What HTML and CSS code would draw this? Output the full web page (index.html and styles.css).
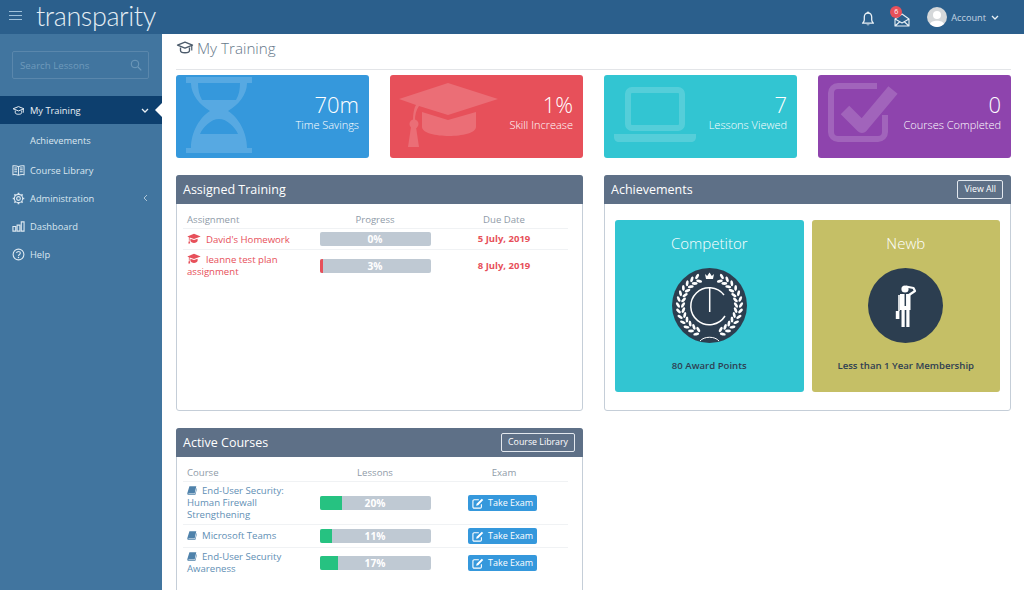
FILE: index.html
```html
<!DOCTYPE html>
<html lang="en">
<head>
<meta charset="utf-8">
<title>My Training</title>
<link rel="stylesheet" href="styles.css">
</head>
<body>
<svg class="defs" aria-hidden="true">
  <symbol id="cap" viewBox="0 0 24 18"><path d="M12 1 23.5 5.5 12 10 4.5 7.2V13H3.2V6.7L.5 5.5Z"/><path d="M5.8 9.3 12 11.6 18.2 9.3V13C18.2 15 15 16.5 12 16.5S5.8 15 5.8 13Z"/><path d="M2.2 17.5 3 13.5H4.7L5.5 17.5Z"/></symbol>
  <symbol id="capo" viewBox="0 0 24 18"><path d="M12 1.8 22 5.8 12 9.8 2 5.8Z" fill="none" stroke="currentColor" stroke-width="1.8" stroke-linejoin="round"/><path d="M6 9V13C6 15 9 16 12 16S18 15 18 13V9" fill="none" stroke="currentColor" stroke-width="1.8"/><path d="M21 6V13" stroke="currentColor" stroke-width="1.6"/></symbol>
  <symbol id="book" viewBox="0 0 14 13"><path d="M3.4 .5H13L10.8 10.2H2.6C2 10.2 1.8 10.9 2.4 11H11.2L13.4 3.2 14 3.8 11.8 12.5H2C.7 12.5 .2 11.2.5 10Z"/></symbol>
  <symbol id="edit" viewBox="0 0 14 13"><path d="M11 7.5V10.5C11 11.3 10.3 12 9.5 12H2.5C1.7 12 1 11.3 1 10.5V3.5C1 2.7 1.7 2 2.5 2H8" fill="none" stroke="currentColor" stroke-width="1.3"/><path d="M11.5.8 13.2 2.5 7.2 8.6 4.8 9.2 5.4 6.8Z"/></symbol>
</svg>

<div class="app">
  <header class="topbar">
    <div class="top-left">
      <span class="burger"><i></i><i></i><i></i></span>
      <span class="logo">transparity</span>
    </div>
    <div class="top-right">
      <svg class="ic-bell" viewBox="0 0 14 16"><path d="M7 2C4.6 2 3.3 3.8 3.3 6V9C3.3 10.4 2.5 11.3 1.6 12.2H12.4C11.5 11.3 10.7 10.4 10.7 9V6C10.7 3.8 9.4 2 7 2Z" fill="none" stroke="currentColor" stroke-width="1.3" stroke-linejoin="round"/><path d="M5.4 13.4C5.6 14.4 8.4 14.4 8.6 13.4Z" fill="currentColor"/><circle cx="7" cy="1.6" r="1" fill="currentColor"/></svg>
      <span class="mail">
        <svg class="ic-mail" viewBox="0 0 16 14"><path d="M1 6 8 1 15 6V13H1ZM1 6 8 10 15 6M1 13 6 8.5M15 13 10 8.5" fill="none" stroke="currentColor" stroke-width="1.1" stroke-linejoin="round"/></svg>
        <b class="badge">6</b>
      </span>
      <svg class="avatar" viewBox="0 0 20 20"><circle cx="10" cy="10" r="10" fill="#d5d8da"/><circle cx="10" cy="8" r="4" fill="#fff"/><path d="M3 17C4 12.5 16 12.5 17 17 13 21 7 21 3 17Z" fill="#fff"/></svg>
      <span class="account">Account</span>
      <svg class="chev" viewBox="0 0 8 5"><path d="M1 1 4 4 7 1" fill="none" stroke="currentColor" stroke-width="1.3"/></svg>
    </div>
  </header>

  <div class="layout">
    <nav class="sidebar">
      <div class="search"><span>Search Lessons</span>
        <svg viewBox="0 0 12 12"><circle cx="5" cy="5" r="3.8" fill="none" stroke="currentColor"/><path d="M8 8 11.3 11.3" stroke="currentColor" stroke-width="1.1"/></svg>
      </div>
      <a class="nav-item active">
        <svg class="nav-ic"><use href="#capo"/></svg><span>My Training</span>
        <svg class="nav-arrow" viewBox="0 0 8 5"><path d="M1 1 4 4 7 1" fill="none" stroke="currentColor" stroke-width="1.3"/></svg>
      </a>
      <a class="nav-item sub"><span>Achievements</span></a>
      <a class="nav-item">
        <svg class="nav-ic" viewBox="0 0 14 12"><path d="M7 2C5.5 1 3 .8 1 1V10.5C3 10.3 5.5 10.5 7 11.3 8.5 10.5 11 10.3 13 10.5V1C11 .8 8.5 1 7 2ZM7 2V11.3M2.5 3.3H5.5M2.5 5.3H5.5M2.5 7.3H5.5M8.5 3.3H11.5M8.5 5.3H11.5M8.5 7.3H11.5" fill="none" stroke="currentColor" stroke-width="1.1"/></svg><span>Course Library</span>
      </a>
      <a class="nav-item">
        <svg class="nav-ic" viewBox="0 0 14 14"><circle cx="7" cy="7" r="2" fill="none" stroke="currentColor" stroke-width="1.2"/><circle cx="7" cy="7" r="4.5" fill="none" stroke="currentColor" stroke-width="1.2"/><path d="M7 .8V2.5M7 11.5V13.2M.8 7H2.5M11.5 7H13.2M2.6 2.6 3.8 3.8M10.2 10.2 11.4 11.4M2.6 11.4 3.8 10.2M10.2 3.8 11.4 2.6" stroke="currentColor" stroke-width="1.8"/></svg><span>Administration</span>
        <svg class="nav-arrow nav-arrow-left" viewBox="0 0 5 8"><path d="M4 1 1 4 4 7" fill="none" stroke="currentColor" stroke-width="1"/></svg>
      </a>
      <a class="nav-item">
        <svg class="nav-ic" viewBox="0 0 14 12"><path d="M1 6H4V11H1ZM5.5 4.5H8.5V11H5.5ZM10 1H13V11H10Z" fill="none" stroke="currentColor" stroke-width="1.2"/></svg><span>Dashboard</span>
      </a>
      <a class="nav-item">
        <svg class="nav-ic" viewBox="0 0 14 14"><circle cx="7" cy="7" r="5.8" fill="none" stroke="currentColor" stroke-width="1.2"/><path d="M5 5.5C5 3.2 9 3.2 9 5.5 9 7 7 7 7 8.6" fill="none" stroke="currentColor" stroke-width="1.2"/><circle cx="7" cy="10.3" r=".8" fill="currentColor"/></svg><span>Help</span>
      </a>
    </nav>

    <main class="main">
      <h1 class="page-title"><svg><use href="#capo"/></svg>My Training</h1>

      <section class="grid">
        <div class="stat blue">
          <svg class="stat-ic" viewBox="0 0 120 83"><path fill-rule="evenodd" d="M10 2H76V8H71C71 20 62 30 52 36 62 42 71 57 71 73H76V78H10V73H15C15 57 24 42 34 36 24 30 15 20 15 8H10ZM22 8C22 14 23 20 26 25H60C63 20 64 14 64 8ZM43 44C35 44 27 52 24 59H62C59 52 51 44 43 44Z"/></svg>
          <div class="stat-text"><strong>70m</strong><span>Time Savings</span></div>
        </div>
        <div class="stat red">
          <svg class="stat-ic" viewBox="0 0 120 83"><path d="M58 8 108 24 58 40 29 31C26 35 25 40 25 45H23C23 39 24 33 26 30L9 24Z"/><path d="M32 37 58 45 86 37V52C86 58 72 61 59 61 46 61 32 58 32 52Z"/><circle cx="24" cy="49" r="4.5"/><path d="M18 72 21 52H26L29 72Z"/></svg>
          <div class="stat-text"><strong>1%</strong><span>Skill Increase</span></div>
        </div>
        <div class="stat teal">
          <svg class="stat-ic" viewBox="0 0 120 83"><rect x="24" y="15" width="54" height="38" rx="4" fill="none" stroke="#fff" stroke-width="6"/><path d="M10 59H92V62C92 65 90 67 87 67H15C12 67 10 65 10 62Z"/></svg>
          <div class="stat-text"><strong>7</strong><span>Lessons Viewed</span></div>
        </div>
        <div class="stat purple">
          <svg class="stat-ic" viewBox="0 0 120 83"><path d="M59 11H20C16 11 13 14 13 18V57C13 61 16 64 20 64H60C64 64 67 61 67 57V40" fill="none" stroke="#fff" stroke-width="6"/><path d="M27 35 44 52 75 15" fill="none" stroke="#fff" stroke-width="12" stroke-linejoin="round"/></svg>
          <div class="stat-text"><strong>0</strong><span>Courses Completed</span></div>
        </div>

        <article class="panel">
          <header class="panel-head"><h2>Assigned Training</h2></header>
          <div class="rows">
            <div class="row row-head"><span>Assignment</span><span class="mid">Progress</span><span class="mid">Due Date</span></div>
            <div class="row">
              <span class="name red-text"><svg class="cap-ic"><use href="#cap"/></svg>David's Homework</span>
              <span class="bar"><i class="fill fill-red" style="width:0%"></i><em>0%</em></span>
              <span class="mid date">5 July, 2019</span>
            </div>
            <div class="row">
              <span class="name red-text"><svg class="cap-ic"><use href="#cap"/></svg>leanne test plan assignment</span>
              <span class="bar"><i class="fill fill-red" style="width:3%"></i><em>3%</em></span>
              <span class="mid date">8 July, 2019</span>
            </div>
          </div>
        </article>

        <article class="panel">
          <header class="panel-head"><h2>Achievements</h2><a class="head-btn">View All</a></header>
          <div class="awards">
            <div class="award teal">
              <h3>Competitor</h3>
              <svg class="medal" viewBox="0 0 75 75">
                <defs>
                  <g id="lf"><ellipse cx="37" cy="6" rx="1.4" ry="3" transform="rotate(-55 37 6)"/><ellipse cx="37" cy="11" rx="1.4" ry="3" transform="rotate(55 37 11)"/></g>
                  <g id="lg"><ellipse cx="38" cy="6" rx="1.4" ry="3" transform="rotate(55 38 6)"/><ellipse cx="38" cy="11" rx="1.4" ry="3" transform="rotate(-55 38 11)"/></g>
                </defs>
                <circle cx="37.5" cy="37.5" r="37.5" fill="#2c3e50"/>
                <g fill="#fff">
                  <use href="#lf" transform="rotate(24 37.5 37.5)"/><use href="#lf" transform="rotate(35 37.5 37.5)"/><use href="#lf" transform="rotate(46 37.5 37.5)"/><use href="#lf" transform="rotate(57 37.5 37.5)"/><use href="#lf" transform="rotate(68 37.5 37.5)"/><use href="#lf" transform="rotate(79 37.5 37.5)"/><use href="#lf" transform="rotate(90 37.5 37.5)"/><use href="#lf" transform="rotate(101 37.5 37.5)"/><use href="#lf" transform="rotate(112 37.5 37.5)"/><use href="#lf" transform="rotate(123 37.5 37.5)"/><use href="#lf" transform="rotate(134 37.5 37.5)"/><use href="#lf" transform="rotate(145 37.5 37.5)"/><use href="#lf" transform="rotate(156 37.5 37.5)"/>
                  <use href="#lg" transform="rotate(-24 37.5 37.5)"/><use href="#lg" transform="rotate(-35 37.5 37.5)"/><use href="#lg" transform="rotate(-46 37.5 37.5)"/><use href="#lg" transform="rotate(-57 37.5 37.5)"/><use href="#lg" transform="rotate(-68 37.5 37.5)"/><use href="#lg" transform="rotate(-79 37.5 37.5)"/><use href="#lg" transform="rotate(-90 37.5 37.5)"/><use href="#lg" transform="rotate(-101 37.5 37.5)"/><use href="#lg" transform="rotate(-112 37.5 37.5)"/><use href="#lg" transform="rotate(-123 37.5 37.5)"/><use href="#lg" transform="rotate(-134 37.5 37.5)"/><use href="#lg" transform="rotate(-145 37.5 37.5)"/><use href="#lg" transform="rotate(-156 37.5 37.5)"/>
                  <path d="M33 6 35.2 8 37.5 4.5 39.8 8 42 6 41 11H34Z"/>
                </g>
                <path d="M52 27A18.5 18.5 0 1 0 53 48" fill="none" stroke="#fff" stroke-width="1.5"/>
                <path d="M37.7 20V44" stroke="#fff" stroke-width="1.5"/>
                <path d="M28 73C32 68 43 68 47 73" fill="none" stroke="#fff" stroke-width="1"/>
              </svg>
              <p>80 Award Points</p>
            </div>
            <div class="award khaki">
              <h3>Newb</h3>
              <svg class="medal" viewBox="0 0 75 75">
                <circle cx="37.5" cy="37.5" r="37.5" fill="#2c3e50"/>
                <circle cx="37" cy="21" r="3.6" fill="#fff"/>
                <path d="M32 26H42.5V42H41.5V59H38.3V42H36.7V59H33.5V42H32Z" fill="#fff"/>
                <path d="M41 27 47 23 45.5 20 38 18.5" fill="none" stroke="#fff" stroke-width="2.2" stroke-linejoin="round"/>
                <path d="M31 27V43" stroke="#fff" stroke-width="1.6"/>
                <rect x="27.8" y="43" width="3.6" height="8" fill="#fff"/>
                <path d="M37.3 26V38" stroke="#2c3e50" stroke-width="1.5"/>
              </svg>
              <p>Less than 1 Year Membership</p>
            </div>
          </div>
        </article>

        <article class="panel">
          <header class="panel-head"><h2>Active Courses</h2><a class="head-btn">Course Library</a></header>
          <div class="rows">
            <div class="row row-head"><span>Course</span><span class="mid">Lessons</span><span class="mid">Exam</span></div>
            <div class="row">
              <span class="name blue-text"><svg class="book-ic"><use href="#book"/></svg>End-User Security: Human Firewall Strengthening</span>
              <span class="bar"><i class="fill fill-green" style="width:20%"></i><em>20%</em></span>
              <span class="mid"><a class="exam"><svg><use href="#edit"/></svg>Take Exam</a></span>
            </div>
            <div class="row">
              <span class="name blue-text"><svg class="book-ic"><use href="#book"/></svg>Microsoft Teams</span>
              <span class="bar"><i class="fill fill-green" style="width:11%"></i><em>11%</em></span>
              <span class="mid"><a class="exam"><svg><use href="#edit"/></svg>Take Exam</a></span>
            </div>
            <div class="row">
              <span class="name blue-text"><svg class="book-ic"><use href="#book"/></svg>End-User Security Awareness</span>
              <span class="bar"><i class="fill fill-green" style="width:17%"></i><em>17%</em></span>
              <span class="mid"><a class="exam"><svg><use href="#edit"/></svg>Take Exam</a></span>
            </div>
          </div>
        </article>
      </section>
    </main>
  </div>
</div>
</body>
</html>
```
FILE: styles.css
```css
* { box-sizing: border-box; }
html, body { margin: 0; padding: 0; height: 590px; overflow: hidden; }
body { font-family: "Open Sans", "Liberation Sans", sans-serif; font-size: 9.6px; background: #fff; color: #5a6a7a; }
.defs { display: none; }
.app { height: 590px; display: flex; flex-direction: column; overflow: hidden; }

.topbar { height: 34px; flex: none; background: #2b5f8c; display: flex; justify-content: space-between; align-items: center; color: #fff; }
.top-left { display: flex; align-items: center; }
.burger { width: 13px; margin-left: 9px; margin-bottom: 3px; display: flex; flex-direction: column; gap: 3px; }
.burger i { display: block; height: 1px; background: #9fc1da; }
.logo { margin-left: 14px; font-family: "Lato", sans-serif; font-weight: 300; font-size: 27px; line-height: 30px; color: #e4edf3; margin-bottom: 3px; letter-spacing: -.4px; }
.top-right { display: flex; align-items: center; padding-right: 25px; color: #e9f0f5; }
.ic-bell { width: 14px; height: 16px; margin-top: 3px; }
.mail { position: relative; display: block; width: 16px; height: 14px; margin-left: 19px; margin-top: 6px; }
.ic-mail { width: 16px; height: 14px; display: block; }
.badge { position: absolute; left: -4px; top: -7px; width: 12px; height: 12px; border-radius: 50%; background: #e7505a; color: #fff; font-size: 7px; font-weight: 400; line-height: 12px; text-align: center; }
.avatar { width: 20px; height: 20px; margin-left: 17px; }
.account { margin-left: 4px; font-size: 9.2px; color: #c3d4e2; }
.chev { width: 8px; height: 5px; margin-left: 5px; }

.layout { flex: 1; display: flex; min-height: 0; }
.sidebar { width: 162px; flex: none; background: #41759f; padding-top: 17px; color: #dbe7f0; }
.search { margin: 0 13px 17px 12px; height: 28px; border: 1px solid #5a87ac; border-radius: 2px; display: flex; align-items: center; justify-content: space-between; padding: 0 6px 0 7px; color: #6f9abb; font-size: 9.7px; }
.search svg { width: 12px; height: 12px; }
.nav-item { display: flex; align-items: center; height: 28px; padding-left: 12px; position: relative; color: #dbe7f0; font-size: 9.3px; }
.nav-ic { width: 13px; height: 13px; flex: none; margin-right: 5px; }
.nav-arrow { position: absolute; right: 13px; top: 12px; width: 8px; height: 5px; }
.nav-arrow-left { width: 5px; height: 8px; top: 10px; right: 14px; opacity: .7; }
.active { background: #0d3f6e; color: #e9f0f5; }
.active::after { content: ""; position: absolute; right: 0; top: 7px; border: 7px solid transparent; border-right-color: #fff; border-left-width: 0; }
.sub { margin: 2px 0; padding-left: 30px; }

.main { flex: 1; padding: 0 13px 0 14px; min-width: 0; overflow: hidden; }
.page-title { margin: 0 0 5px; height: 36px; border-bottom: 1px solid #e3e5e8; font-size: 15.2px; font-weight: 300; display: flex; align-items: center; padding-bottom: 8px; color: #66788a; }
.page-title svg { width: 18px; height: 15px; margin-right: 3px; color: #4c5b6b; }

.grid { display: grid; grid-template-columns: repeat(4, 193px); column-gap: 21px; row-gap: 17px; grid-auto-rows: min-content; }
.stat { height: 83px; border-radius: 3px; display: flex; justify-content: space-between; color: #fff; padding-right: 10px; }
.stat-ic { height: 83px; width: 120px; margin-right: -60px; fill: #fff; opacity: .17; flex: none; }
.stat-text { display: flex; flex-direction: column; align-items: flex-end; padding-top: 16px; white-space: nowrap; }
.stat-text strong { font-size: 22px; font-weight: 300; line-height: 27px; }
.stat-text span { font-size: 11px; font-weight: 300; line-height: 14px; }
.blue { background: #3598dc; }
.red { background: #e7505a; }
.teal { background: #32c5d2; }
.purple { background: #8e44ad; }
.khaki { background: #c5bf66; }

.panel { grid-column: span 2; height: 236px; border: 1px solid #c5ced8; border-radius: 3px; background: #fff; }
.panel-head { height: 29px; margin: -1px -1px 0; background: #5e7087; border-radius: 3px 3px 0 0; display: flex; align-items: center; justify-content: space-between; padding: 0 8px 0 7px; color: #fff; }
.panel-head h2 { margin: 0; font-size: 12.5px; font-weight: 400; }
.head-btn { border: 1px solid #e3e8ee; border-radius: 2px; color: #fff; font-size: 8.8px; padding: 0 6px; height: 19px; line-height: 17px; }

.rows { padding: 7px 14px 0 6px; }
.row { display: grid; grid-template-columns: 127px 130px 128px; align-items: center; padding: 3px 0; border-bottom: 1px solid #f0f2f4; line-height: 12px; }
.row:last-child { border-bottom: 0; }
.row > :first-child { padding-left: 4px; }
.row-head { color: #8f9ba8; padding: 3px 0 2px; }
.mid { text-align: center; }
.name { display: block; }
.red-text { color: #e7505a; }
.blue-text { color: #5f8fb5; }
.cap-ic { width: 14px; height: 11px; margin-right: 5px; fill: #e7505a; vertical-align: -1px; }
.book-ic { width: 10px; height: 11px; margin-right: 5px; fill: #4f82ab; vertical-align: -2px; }
.date { color: #e7505a; font-weight: 700; font-size: 9.5px; }
.bar { display: block; position: relative; width: 111px; height: 14px; margin: 0 auto; background: #bfc9d3; border-radius: 2px; overflow: hidden; }
.fill { display: block; height: 14px; }
.fill-red { background: #e7505a; }
.fill-green { background: #26c281; }
.bar em { position: absolute; inset: 0; text-align: center; font-style: normal; font-weight: 700; color: #fff; font-size: 10.2px; line-height: 14px; }
.exam { display: inline-flex; align-items: center; height: 16px; width: 69px; padding-left: 4px; margin-right: 3px; vertical-align: top; background: #3598dc; border-radius: 2px; color: #fff; font-size: 9px; font-weight: 400; white-space: nowrap; }
.exam svg { width: 12px; height: 11px; margin-right: 4px; fill: #fff; color: #fff; flex: none; }

.awards { display: grid; grid-template-columns: 1fr 1fr; gap: 8px; padding: 16px 10px 0; }
.award { height: 172px; border-radius: 3px; display: flex; flex-direction: column; align-items: center; }
.award h3 { margin: 13px 0 15px; font-size: 15px; font-weight: 300; line-height: 20px; color: #fff; }
.medal { width: 75px; height: 75px; display: block; }
.award p { margin: 17px 0 0; font-size: 9.6px; font-weight: 600; line-height: 12px; color: #2f3e52; }
```
